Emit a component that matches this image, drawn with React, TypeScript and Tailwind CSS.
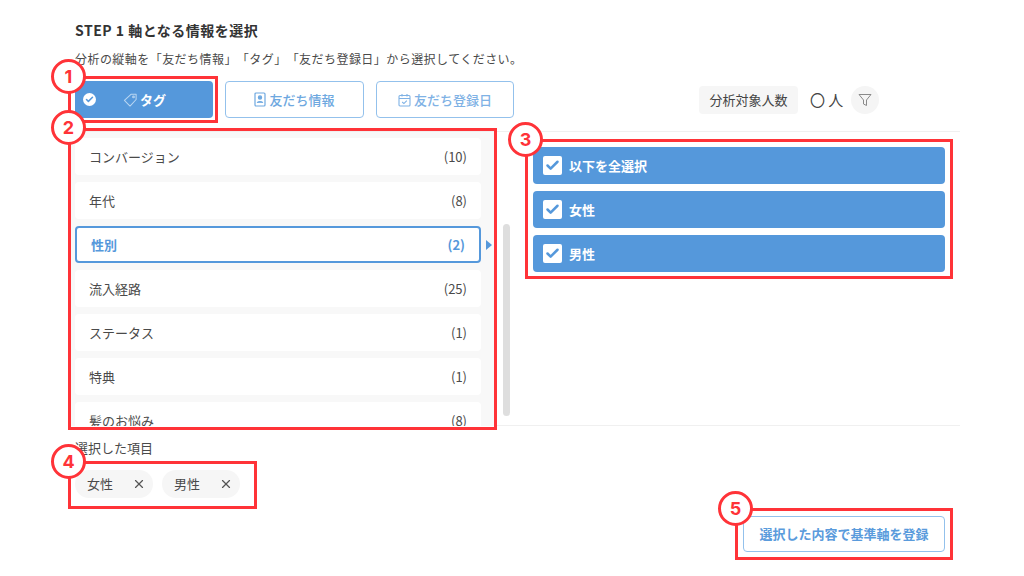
import React from 'react';
import { Check, X } from 'lucide-react';

const font = { fontFamily: '"Noto Sans CJK JP", "Noto Sans", sans-serif' };

const groups = [
  { name: 'コンバージョン', count: 10 },
  { name: '年代', count: 8 },
  { name: '性別', count: 2, active: true },
  { name: '流入経路', count: 25 },
  { name: 'ステータス', count: 1 },
  { name: '特典', count: 1 },
  { name: '髪のお悩み', count: 8 },
];

const options = ['以下を全選択', '女性', '男性'];
const chips = ['女性', '男性'];

// red annotation frames painted over the screen
const frames = [
  { n: 1, box: 'left-[68px] top-[76px] w-[150px] h-[47px]', dot: 'left-[51px] top-[59px]' },
  { n: 2, box: 'left-[68px] top-[128px] w-[429px] h-[302px]', dot: 'left-[51px] top-[110px]' },
  { n: 3, box: 'left-[525px] top-[139px] w-[428px] h-[140px]', dot: 'left-[508px] top-[122px]' },
  { n: 4, box: 'left-[68px] top-[461px] w-[189px] h-[48px]', dot: 'left-[51px] top-[444px]' },
  { n: 5, box: 'left-[735px] top-[508px] w-[218px] h-[52px]', dot: 'left-[718px] top-[491px]' },
];

const TagIcon = () => (
  <svg width="15" height="15" viewBox="0 0 16 16" fill="none" stroke="#b9d6f2" strokeWidth="1.1" strokeLinejoin="round">
    <path d="M1.5 9 8.5 2.5h5.5v5.5l-6.5 7z" />
    <circle cx="11.2" cy="5.2" r="0.9" />
  </svg>
);

const PersonCardIcon = () => (
  <svg width="12" height="15" viewBox="0 0 12 15" fill="none" stroke="#6ea8e0" strokeWidth="1.2">
    <rect x="1" y="1" width="10" height="13" rx="1" />
    <circle cx="6" cy="5.5" r="1.6" fill="#6ea8e0" />
    <path d="M3.2 10.8c.5-1.6 5.1-1.6 5.6 0" fill="#6ea8e0" />
  </svg>
);

const CalendarIcon = () => (
  <svg width="13" height="14" viewBox="0 0 13 14" fill="none" stroke="#7fb2e5" strokeWidth="1.1">
    <rect x="1" y="2.5" width="11" height="10.5" rx="1" />
    <path d="M1 5.5h11M4 1v2.5M9 1v2.5M4.2 9l1.7 1.6 2.9-3" />
  </svg>
);

const FilterIcon = () => (
  <svg width="14" height="14" viewBox="0 0 14 14" fill="none" stroke="#8a8a8a" strokeWidth="1" strokeLinejoin="round">
    <path d="M1 1.5h12L8.5 7v5.5l-3-1.5V7z" />
  </svg>
);

const App = () => {
  return (
    <div style={font} className="relative w-[1024px] h-[576px] overflow-hidden bg-white text-[#3d3d3d]">
      <div className="pl-[75px] pr-[64px] pt-[20px]">
        <h1 className="h-[20px] text-[14px] leading-[20px] font-bold text-[#333] tracking-[0.5px]">STEP 1 軸となる情報を選択</h1>
        <p className="mt-[10px] h-[18px] text-[12px] leading-[18px] text-[#4a4a4a] tracking-[0.45px] whitespace-nowrap [text-spacing-trim:space-all]">
          分析の縦軸を「友だち情報」「タグ」「友だち登録日」から選択してください。
        </p>

        <div className="mt-[13px] h-[37px] flex items-center">
          <button className="relative w-[138px] h-[37px] rounded-[4px] bg-[#5598db] flex items-center pl-[48px] gap-[2px] text-white text-[13px] font-bold">
            <span className="absolute left-[8px] top-[12px] w-[13px] h-[13px] rounded-full bg-white flex items-center justify-center">
              <Check size={9} strokeWidth={4} className="text-[#5598db]" />
            </span>
            <TagIcon />
            タグ
          </button>
          <button className="ml-[12px] w-[139px] h-[37px] rounded-[4px] border border-[#93c1ec] flex items-center justify-center gap-[3px] text-[#6ea8e0] text-[13px] font-medium">
            <PersonCardIcon />
            友だち情報
          </button>
          <button className="ml-[12px] w-[138px] h-[37px] rounded-[4px] border border-[#93c1ec] flex items-center justify-center gap-[3px] text-[#7fb2e5] text-[13px] font-medium">
            <CalendarIcon />
            友だち登録日
          </button>
          <div className="ml-[185px] h-[28px] w-[99px] rounded-[4px] bg-[#f6f6f6] flex items-center justify-center text-[13px] text-[#444]">
            分析対象人数
          </div>
          <span className="ml-[12px] w-[42px] text-[15px] leading-none text-[#444] whitespace-nowrap">〇 人</span>
          <div className="-ml-[1px] w-[28px] h-[28px] rounded-full bg-[#f5f5f5] flex items-center justify-center">
            <FilterIcon />
          </div>
        </div>

        <div className="mt-[13px] h-[295px] -ml-[5px] border-t border-b border-[#f0f0f0] flex">
          <div className="w-[425px] h-[294px] bg-[#f8f8f8] overflow-hidden pl-[5px] pt-[6px] flex flex-col gap-[7px] shrink-0">
            {groups.map((g) => (
              <div key={g.name} className="relative shrink-0 w-[406px]">
                <div
                  className={
                    g.active
                      ? 'h-[37px] rounded-[4px] bg-white border-2 border-[#5598db] flex items-center justify-between pl-[14px] pr-[14px] text-[13px] font-bold text-[#5598db]'
                      : 'h-[37px] rounded-[4px] bg-white flex items-center justify-between pl-[14px] pr-[14px] text-[13px] text-[#4a4a4a]'
                  }
                >
                  <span>{g.name}</span>
                  <span>({g.count})</span>
                </div>
                {g.active && (
                  <span className="absolute left-[411px] top-[14px] w-0 h-0 border-y-[5px] border-y-transparent border-l-[6px] border-l-[#5598db]" />
                )}
              </div>
            ))}
          </div>

          <div className="relative w-[38px] shrink-0">
            <div className="absolute left-[8px] top-[92px] w-[7px] h-[192px] rounded-full bg-[#dedede]" />
          </div>

          <div className="flex-1 pt-[15px] pr-[15px] flex flex-col gap-[7px]">
            {options.map((o) => (
              <div key={o} className="h-[37px] rounded-[4px] bg-[#5598db] flex items-center pl-[10px] gap-[7px] text-white text-[13px] font-bold">
                <span className="w-[19px] h-[19px] rounded-[2px] bg-white flex items-center justify-center">
                  <Check size={15} strokeWidth={4} className="text-[#5598db]" />
                </span>
                {o}
              </div>
            ))}
          </div>
        </div>

        <p className="mt-[13px] h-[18px] text-[13px] leading-[18px] text-[#4a4a4a]">選択した項目</p>
        <div className="mt-[13px] flex gap-[9px]">
          {chips.map((c) => (
            <div key={c} className="w-[78px] h-[28px] rounded-full bg-[#f6f6f6] flex items-center justify-between pl-[12px] pr-[7px] text-[13px] text-[#4a4a4a]">
              {c}
              <X size={14} strokeWidth={2} className="text-[#555]" />
            </div>
          ))}
        </div>

        <div className="mt-[18px] flex justify-end pr-[15px]">
          <button className="w-[202px] h-[36px] rounded-[4px] border border-[#93c1ec] text-[#5a9bdc] text-[13px] font-bold">
            選択した内容で基準軸を登録
          </button>
        </div>
      </div>

      {frames.map((f) => (
        <React.Fragment key={f.n}>
          <div className={`absolute ${f.box} border-[3px] border-[#ff3338]`} />
          <div className={`absolute ${f.dot} w-[35px] h-[35px] rounded-full bg-white border-[3px] border-[#ff3338] flex items-center justify-center text-[#ff3338] text-[18px] font-bold`} style={{ fontFamily: 'Inter, sans-serif' }}>
            {f.n}
          </div>
        </React.Fragment>
      ))}
    </div>
  );
};

export default App;
